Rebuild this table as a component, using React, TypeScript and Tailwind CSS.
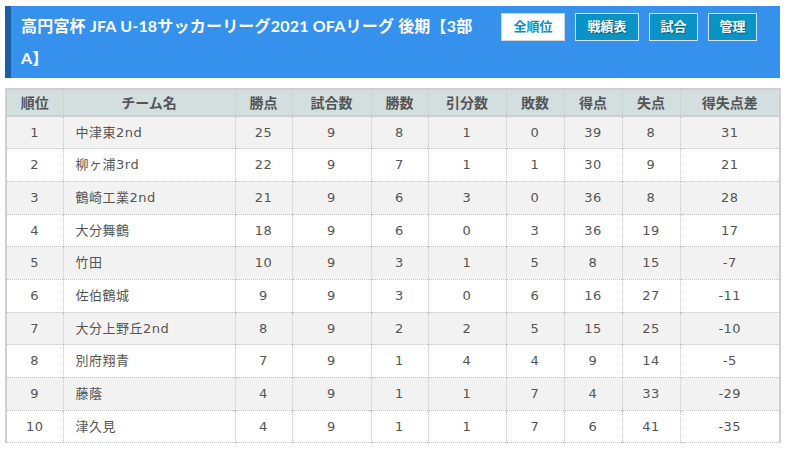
import React from "react";

const rows: (string | number)[][] = [
  [1, "中津東2nd", 25, 9, 8, 1, 0, 39, 8, 31],
  [2, "柳ヶ浦3rd", 22, 9, 7, 1, 1, 30, 9, 21],
  [3, "鶴崎工業2nd", 21, 9, 6, 3, 0, 36, 8, 28],
  [4, "大分舞鶴", 18, 9, 6, 0, 3, 36, 19, 17],
  [5, "竹田", 10, 9, 3, 1, 5, 8, 15, -7],
  [6, "佐伯鶴城", 9, 9, 3, 0, 6, 16, 27, -11],
  [7, "大分上野丘2nd", 8, 9, 2, 2, 5, 15, 25, -10],
  [8, "別府翔青", 7, 9, 1, 4, 4, 9, 14, -5],
  [9, "藤蔭", 4, 9, 1, 1, 7, 4, 33, -29],
  [10, "津久見", 4, 9, 1, 1, 7, 6, 41, -35],
];

const heads = ["順位", "チーム名", "勝点", "試合数", "勝数", "引分数", "敗数", "得点", "失点", "得失点差"];
const widths = [57, 172, 57, 79, 57, 78, 58, 58, 58, 100];

export default function App() {
  return (
    <div
      className="w-[785px] h-[452px] bg-white px-[5px] pt-[6px] overflow-hidden"
      style={{ fontFamily: "Lato, 'Noto Sans CJK JP', sans-serif" }}
    >
      <div className="flex h-[72px] bg-[#3691ec] border-l-[6px] border-[#1a5ea6] pr-[21px]">
        <h1 className="w-[480px] shrink-0 pl-[10px] pr-[16px] pt-[4px] text-[16px] tracking-[0.2px] leading-[32px] font-bold text-white">
          高円宮杯 JFA U-18サッカーリーグ2021 OFAリーグ 後期【3部A】
        </h1>
        <div className="flex gap-[10px] pt-[7px] ml-[10px]">
          <span className="flex items-center justify-center w-[64px] h-[28px] bg-white border border-[#cfd8dc] text-[#0b8fc4] text-[13px] font-bold">
            全順位
          </span>
          <span className="flex items-center justify-center w-[64px] h-[28px] bg-[#0a94c6] border border-[#cfe3ee] text-white text-[13px] font-bold [text-shadow:1px_1px_1px_rgba(0,0,0,0.4)]">
            戦績表
          </span>
          <span className="flex items-center justify-center w-[49px] h-[28px] bg-[#0a94c6] border border-[#cfe3ee] text-white text-[13px] font-bold [text-shadow:1px_1px_1px_rgba(0,0,0,0.4)]">
            試合
          </span>
          <span className="flex items-center justify-center w-[49px] h-[28px] bg-[#0a94c6] border border-[#cfe3ee] text-white text-[13px] font-bold [text-shadow:1px_1px_1px_rgba(0,0,0,0.4)]">
            管理
          </span>
        </div>
      </div>
      <table className="mt-[10px] w-[774px] table-fixed border-collapse border-x-2 border-t-2 border-[#cfcfcf] text-[#555]">
        <colgroup>
          {widths.map((w, i) => (
            <col key={i} style={{ width: w }} />
          ))}
        </colgroup>
        <thead>
          <tr className="bg-[#d3dfdf] h-[27px] border-b-2 border-[#cfcfcf]">
            {heads.map((h, i) => (
              <th
                key={i}
                className="text-[14px] font-bold text-[#555] text-center border-l border-dotted border-[#c8c8c8] first:border-l-0 p-0"
              >
                {h}
              </th>
            ))}
          </tr>
        </thead>
        <tbody style={{ fontFamily: "'DejaVu Sans', 'Noto Sans CJK JP', sans-serif" }}>
          {rows.map((r, ri) => (
            <tr
              key={ri}
              className={`h-[32.7px] border-b border-dotted border-[#c4c4c4] ${ri % 2 === 0 ? "bg-[#f2f2f2]" : "bg-white"}`}
            >
              {r.map((c, ci) => (
                <td
                  key={ci}
                  className={`text-[13px] p-0 border-l border-dotted border-[#c4c4c4] first:border-l-0 ${
                    ci === 1 ? "text-left pl-[12px] tracking-[0.5px]" : "text-center tracking-[0.5px]"
                  }`}
                >
                  {c}
                </td>
              ))}
            </tr>
          ))}
        </tbody>
      </table>
    </div>
  );
}
